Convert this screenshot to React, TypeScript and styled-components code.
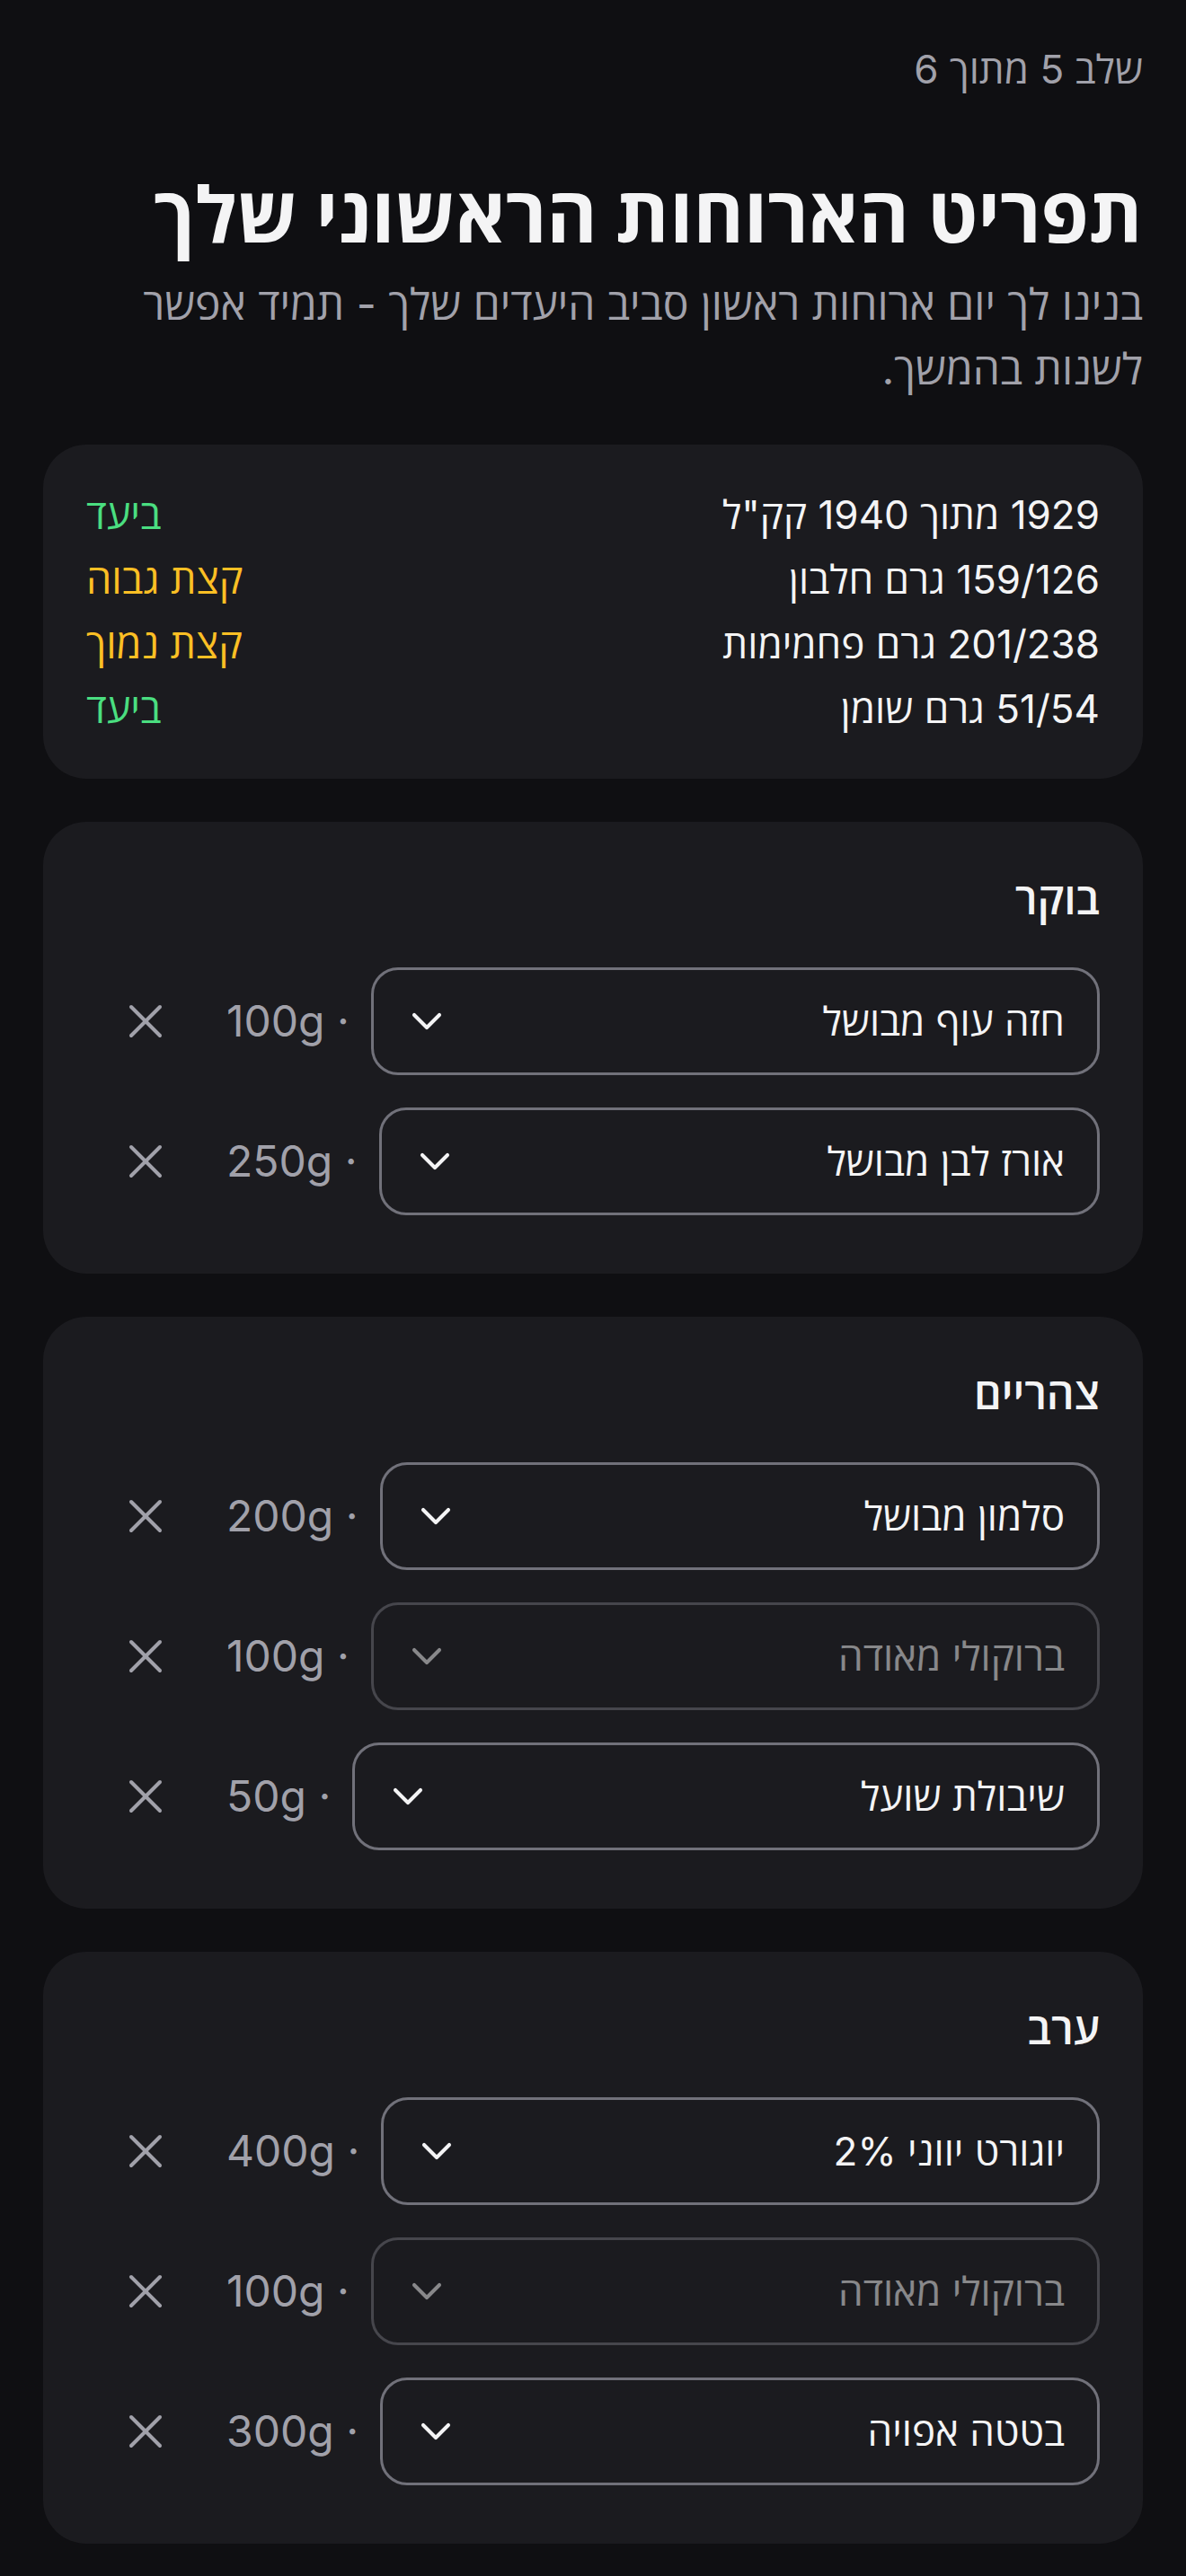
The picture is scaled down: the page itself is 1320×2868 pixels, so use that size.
import React from 'react';
import styled, { createGlobalStyle } from 'styled-components';
import { X, ChevronDown } from 'lucide-react';

const GlobalStyle = createGlobalStyle`
  html, body { margin: 0; padding: 0; background: #0f0f12; }
  body {
    font-family: Inter, "Open Sans", sans-serif;
    color: #f4f4f5;
    -webkit-font-smoothing: antialiased;
  }
  * { box-sizing: border-box; }
`;

const Page = styled.main`
  direction: rtl;
  padding: 48px 48px 96px;
  min-height: 2868px;
  background: #0f0f12;
  display: flex;
  flex-direction: column;
`;

const StepLabel = styled.div`
  font-size: 44px;
  line-height: 58px;
  color: #a1a1aa;
`;

const Title = styled.h1`
  margin: 88px 0 0;
  font-size: 86px;
  line-height: 90px;
  font-weight: 700;
  color: #f4f4f5;
  white-space: nowrap;
`;

const Subtitle = styled.p`
  margin: 19px 0 0;
  font-size: 48px;
  line-height: 72px;
  color: #a1a1aa;
`;

const Cards = styled.div`
  margin-top: 48px;
  display: flex;
  flex-direction: column;
  gap: 48px;
`;

const Card = styled.section<{ $bottom?: number }>`
  background: #1b1b1f;
  border-radius: 48px;
  padding: 48px 48px ${(p) => p.$bottom ?? 48}px;
`;

const SummaryList = styled.div`
  display: flex;
  flex-direction: column;
  gap: 12px;
`;

const SummaryRow = styled.div`
  display: flex;
  justify-content: space-between;
  align-items: center;
  font-size: 44px;
  line-height: 60px;
`;

const SummaryLabel = styled.span`
  color: #f4f4f5;
`;

const Status = styled.span<{ $tone: 'ok' | 'warn' }>`
  font-size: 45px;
  color: ${(p) => (p.$tone === 'ok' ? '#4ade80' : '#fbbf24')};
`;

const MealTitle = styled.h2`
  margin: 0 0 39px;
  font-size: 48px;
  line-height: 75px;
  font-weight: 600;
  color: #f4f4f5;
`;

const ItemList = styled.div`
  display: flex;
  flex-direction: column;
  gap: 36px;
`;

const ItemRow = styled.div`
  display: flex;
  align-items: center;
  gap: 24px;
`;

const FoodSelect = styled.button<{ $dim?: boolean }>`
  flex: 1;
  min-width: 0;
  height: 120px;
  display: flex;
  align-items: center;
  justify-content: space-between;
  padding: 0 36px 0 31px;
  background: #1b1b1f;
  border: 3px solid #71717a;
  border-radius: 30px;
  color: #f4f4f5;
  font-family: inherit;
  font-size: 44px;
  line-height: 60px;
  text-align: right;
  opacity: ${(p) => (p.$dim ? 0.5 : 1)};
  cursor: pointer;
`;

const FoodName = styled.span`
  white-space: nowrap;
`;

const Grams = styled.span`
  font-size: 48px;
  line-height: 60px;
  color: #a1a1aa;
  white-space: nowrap;
`;

const RemoveButton = styled.button`
  width: 132px;
  height: 120px;
  display: flex;
  align-items: center;
  justify-content: center;
  background: transparent;
  border: none;
  padding: 0;
  color: #a1a1aa;
  cursor: pointer;
`;

type Tone = 'ok' | 'warn';

const summary: { label: string; status: string; tone: Tone }[] = [
  { label: '1929 מתוך 1940 קק"ל', status: 'ביעד', tone: 'ok' },
  { label: '159/126 גרם חלבון', status: 'קצת גבוה', tone: 'warn' },
  { label: '201/238 גרם פחמימות', status: 'קצת נמוך', tone: 'warn' },
  { label: '51/54 גרם שומן', status: 'ביעד', tone: 'ok' },
];

type Item = { name: string; grams: number; dim?: boolean };

const meals: { title: string; items: Item[] }[] = [
  {
    title: 'בוקר',
    items: [
      { name: 'חזה עוף מבושל', grams: 100 },
      { name: 'אורז לבן מבושל', grams: 250 },
    ],
  },
  {
    title: 'צהריים',
    items: [
      { name: 'סלמון מבושל', grams: 200 },
      { name: 'ברוקולי מאודה', grams: 100, dim: true },
      { name: 'שיבולת שועל', grams: 50 },
    ],
  },
  {
    title: 'ערב',
    items: [
      { name: 'יוגורט יווני 2%', grams: 400 },
      { name: 'ברוקולי מאודה', grams: 100, dim: true },
      { name: 'בטטה אפויה', grams: 300 },
    ],
  },
];

export default function App() {
  return (
    <>
      <GlobalStyle />
      <Page>
        <StepLabel>שלב 5 מתוך 6</StepLabel>
        <Title>תפריט הארוחות הראשוני שלך</Title>
        <Subtitle>בנינו לך יום ארוחות ראשון סביב היעדים שלך - תמיד אפשר לשנות בהמשך.</Subtitle>
        <Cards>
          <Card>
            <SummaryList>
              {summary.map((s) => (
                <SummaryRow key={s.label}>
                  <SummaryLabel>{s.label}</SummaryLabel>
                  <Status $tone={s.tone}>{s.status}</Status>
                </SummaryRow>
              ))}
            </SummaryList>
          </Card>
          {meals.map((meal) => (
            <Card key={meal.title} $bottom={65}>
              <MealTitle>{meal.title}</MealTitle>
              <ItemList>
                {meal.items.map((item, i) => (
                  <ItemRow key={i}>
                    <FoodSelect $dim={item.dim} type="button">
                      <FoodName>{item.name}</FoodName>
                      <ChevronDown size={56} strokeWidth={1.75} />
                    </FoodSelect>
                    <Grams>{`· ${item.grams}g`}</Grams>
                    <RemoveButton type="button" aria-label="הסר">
                      <X size={64} strokeWidth={1.5} />
                    </RemoveButton>
                  </ItemRow>
                ))}
              </ItemList>
            </Card>
          ))}
        </Cards>
      </Page>
    </>
  );
}
